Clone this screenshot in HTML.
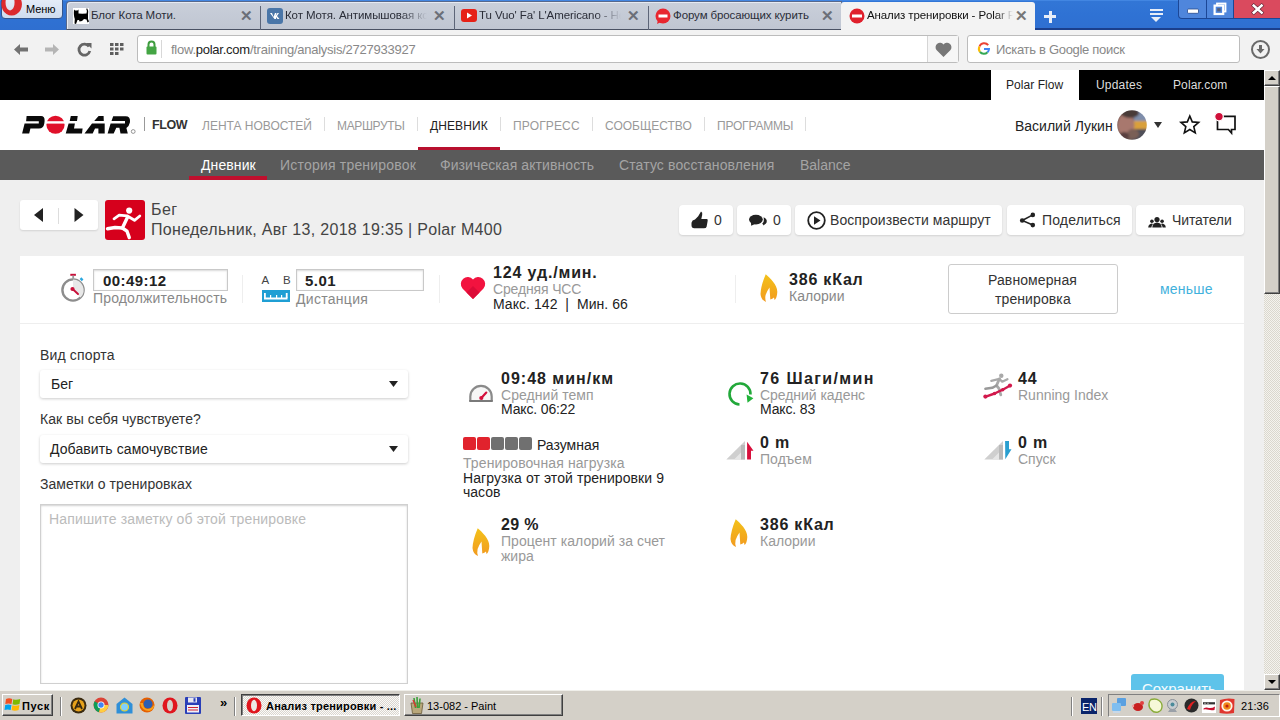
<!DOCTYPE html>
<html><head><meta charset="utf-8">
<style>
*{margin:0;padding:0;box-sizing:border-box}
html,body{width:1280px;height:720px;overflow:hidden;background:#efefef;font-family:"Liberation Sans",sans-serif;position:relative}
.a{position:absolute}
.t{position:absolute;white-space:nowrap;line-height:1}
svg{position:absolute;overflow:visible}
</style></head>
<body>
<!-- ============ BROWSER CHROME ============ -->
<div class="a" style="left:0;top:0;width:1280px;height:30px;background:linear-gradient(#4a8ee8 0,#3276d6 1.5px,#2f72d4 50%,#2f6fd0 100%)"></div>
<!-- opera menu -->
<div class="a" style="left:1px;top:-3px;width:62px;height:22px;background:linear-gradient(#e6edf8,#cfdcef);border:1px solid #34558c;border-radius:0 0 4px 4px"></div>
<svg class="a" style="left:1px;top:0" width="22" height="17" viewBox="0 0 22 17"><path fill-rule="evenodd" d="M10.7 -7 A10.3 11.3 0 1 1 10.6 -7Z M9 -5.6 A4.5 8 0 1 0 9.1 -5.6Z" fill="#dc2a2e"/></svg>
<div class="t" style="left:26px;top:3.9px;font-size:11px;color:#000;letter-spacing:-0.1px">Меню</div>
<!-- tabs -->
<div class="a" style="left:66px;top:1px;width:776px;height:29px;background:linear-gradient(#c9cfda,#c0c6d2);border:1px solid #56688c;border-bottom-color:#4a5264;border-radius:4px 0 0 0;box-shadow:inset 1px 1px 0 #e6eaf2"></div>
<div class="a" style="left:260px;top:6px;width:1px;height:24px;background:#5d6578"></div>
<div class="a" style="left:454px;top:6px;width:1px;height:24px;background:#5d6578"></div>
<div class="a" style="left:648px;top:6px;width:1px;height:24px;background:#5d6578"></div>
<div class="a" style="left:841px;top:2px;width:194px;height:28px;background:#f3f3f3;border-radius:3px 3px 0 0"></div>
<div class="a" style="left:1035px;top:28px;width:245px;height:2px;background:#1b3f8c"></div>
<!-- tab icons -->
<svg class="a" style="left:73px;top:8px" width="16" height="16" viewBox="0 0 16 16"><rect width="16" height="16" fill="#fff"/><path d="M1 1.5 L2 2.5 L4.5 2.5 L5.5 1.5 L5.5 5.5 Q9 5.8 13.5 5.5 Q14.5 3 13.2 0.8 L14.3 0.5 Q16 3 15 7 L15 11 L16 13.5 L14.5 14.5 L13.5 11.5 L11 11 L9 13 L6.5 13.5 L6 12 L4.5 12 L3 16 L1.5 15.5 L1.8 11 Q0.5 8 1 1.5Z" fill="#000"/></svg>
<div class="t" style="left:91px;top:10px;font-size:11.5px;color:#2a2d38;letter-spacing:-0.1px">Блог Кота Моти.</div>
<svg class="a" style="left:267px;top:8px" width="16" height="16" viewBox="0 0 16 16"><rect width="16" height="16" rx="3" fill="#4a76a8"/><path d="M3 5h2l1.5 4L8 5h1.5l-1 3 2-3H12l-2 3 2.5 3h-2L9 9v2H7.5z" fill="#fff"/></svg>
<div class="t" style="left:285px;top:10px;font-size:11.5px;color:#2a2d38;letter-spacing:-0.1px;width:142px;overflow:hidden;-webkit-mask-image:linear-gradient(90deg,#000 82%,transparent)">Кот Мотя. Антимышовая кот</div>
<svg class="a" style="left:461px;top:9px" width="16" height="13" viewBox="0 0 16 13"><rect width="16" height="13" rx="3" fill="#e62117"/><path d="M6 3.5v6l5-3z" fill="#fff"/></svg>
<div class="t" style="left:479px;top:10px;font-size:11.5px;color:#2a2d38;letter-spacing:-0.1px;width:142px;overflow:hidden;-webkit-mask-image:linear-gradient(90deg,#000 82%,transparent)">Tu Vuo' Fa' L'Americano - Hello</div>
<svg class="a" style="left:655px;top:8px" width="16" height="17" viewBox="0 0 16 17"><circle cx="8" cy="8" r="7.5" fill="#e8262f"/><path d="M3 12 L2 16 L6 14z" fill="#e8262f"/><rect x="3.5" y="6.5" width="9" height="3" fill="#fff"/></svg>
<div class="t" style="left:673px;top:10px;font-size:11.5px;color:#2a2d38;letter-spacing:-0.1px">Форум бросающих курить</div>
<svg class="a" style="left:849px;top:8px" width="16" height="16" viewBox="0 0 16 16"><circle cx="8" cy="8" r="7.5" fill="#e0202c"/><rect x="3" y="6.5" width="10" height="3" fill="#fff"/></svg>
<div class="t" style="left:867px;top:10px;font-size:11.5px;color:#111;letter-spacing:-0.1px;width:146px;overflow:hidden;-webkit-mask-image:linear-gradient(90deg,#000 88%,transparent)">Анализ тренировки - Polar Flow</div>
<!-- close x -->
<div class="t" style="left:240px;top:8px;font-size:15px;font-weight:bold;color:#6b6f78">✕</div>
<div class="t" style="left:433px;top:8px;font-size:15px;font-weight:bold;color:#6b6f78">✕</div>
<div class="t" style="left:627px;top:8px;font-size:15px;font-weight:bold;color:#6b6f78">✕</div>
<div class="t" style="left:821px;top:8px;font-size:15px;font-weight:bold;color:#6b6f78">✕</div>
<div class="t" style="left:1015px;top:8px;font-size:15px;font-weight:bold;color:#777">✕</div>
<!-- plus, menu -->
<div class="a" style="left:1044px;top:15px;width:12px;height:3px;background:#e8eef8"></div>
<div class="a" style="left:1048.5px;top:10.5px;width:3px;height:12px;background:#e8eef8"></div>
<div class="a" style="left:1150px;top:9px;width:13px;height:2px;background:#e8eef8"></div>
<div class="a" style="left:1150px;top:13px;width:13px;height:2px;background:#e8eef8"></div>
<div class="a" style="left:1151px;top:17px;width:0;height:0;border-left:5.5px solid transparent;border-right:5.5px solid transparent;border-top:5px solid #e8eef8"></div>
<!-- window buttons -->
<div class="a" style="left:1178px;top:-2px;width:56px;height:21px;background:#4f86dc;border:1px solid #1c4796;border-top:0;border-radius:0 0 0 4px"></div>
<div class="a" style="left:1206px;top:0;width:1px;height:18px;background:#1c4796"></div>
<div class="a" style="left:1233px;top:-2px;width:48px;height:21px;background:#da4a5e;border-bottom:1px solid #1c4796;border-left:1px solid #1c4796"></div>
<svg class="a" style="left:1170px;top:0" width="110" height="20" viewBox="0 0 110 20">
<rect x="17.5" y="9" width="11" height="4.3" rx="1" fill="#fff" stroke="#27498a" stroke-width="0.8"/>
<rect x="47" y="3.5" width="8.5" height="8" fill="none" stroke="#fff" stroke-width="1.8"/>
<rect x="44.6" y="5.6" width="8.6" height="8.4" fill="#4f86dc" stroke="#fff" stroke-width="2.2"/>
<rect x="47.2" y="8.2" width="3.4" height="3.2" fill="#555f78"/>
<path d="M83.8 5.6 L91.6 12.6 M91.6 5.6 L83.8 12.6" stroke="#5a2030" stroke-width="3.8" stroke-linecap="square"/>
<path d="M83.8 5.6 L91.6 12.6 M91.6 5.6 L83.8 12.6" stroke="#fff" stroke-width="2.6" stroke-linecap="square"/>
</svg>
<!-- address bar -->
<div class="a" style="left:0;top:30px;width:1280px;height:40px;background:#f2f2f2"></div>
<svg class="a" style="left:13px;top:43px" width="16" height="13" viewBox="0 0 16 13"><path d="M1 6.5 L7 1 L7 4.5 L15 4.5 L15 8.5 L7 8.5 L7 12Z" fill="#727272"/></svg>
<svg class="a" style="left:44px;top:43px" width="16" height="13" viewBox="0 0 16 13"><path d="M15 6.5 L9 1 L9 4.5 L1 4.5 L1 8.5 L9 8.5 L9 12Z" fill="#b5b5b5"/></svg>
<svg class="a" style="left:77px;top:42px" width="15" height="15" viewBox="0 0 15 15"><path d="M12 4.5 A5.5 5.5 0 1 0 12.8 9" fill="none" stroke="#666" stroke-width="2.8"/><path d="M9 1 L14.5 1 L14.5 6.5Z" fill="#666"/></svg>
<svg class="a" style="left:110px;top:43px" width="14" height="12" viewBox="0 0 14 12"><g fill="#5e5e5e"><rect x="0" y="0" width="3.5" height="3"/><rect x="5" y="0" width="3.5" height="3"/><rect x="10" y="0" width="3.5" height="3"/><rect x="0" y="4.5" width="3.5" height="3"/><rect x="5" y="4.5" width="3.5" height="3"/><rect x="10" y="4.5" width="3.5" height="3"/><rect x="0" y="9" width="3.5" height="3"/><rect x="5" y="9" width="3.5" height="3"/></g></svg>
<div class="a" style="left:137px;top:35px;width:822px;height:28px;background:#fff;border:1px solid #bcbcbc;border-radius:3px"></div>
<div class="a" style="left:927px;top:36px;width:31px;height:26px;background:#f6f6f6;border-left:1px solid #d5d5d5"></div>
<svg class="a" style="left:935px;top:42px" width="17" height="15" viewBox="0 0 17 15"><path d="M8.5 15 L1.5 8 A4 4 0 0 1 8.5 2.5 A4 4 0 0 1 15.5 8Z" fill="#777"/></svg>
<svg class="a" style="left:146px;top:40px" width="11" height="15" viewBox="0 0 11 15"><path d="M2.5 7 V4.5 A3 3 0 0 1 8.5 4.5 V7" fill="none" stroke="#3e9c3e" stroke-width="2"/><rect x="0.5" y="6.5" width="10" height="8" rx="1" fill="#44a544"/></svg>
<div class="a" style="left:161px;top:40px;width:1px;height:18px;background:#d8d8d8"></div>
<div class="t" style="left:171px;top:43px;font-size:13px;color:#888;letter-spacing:-0.25px">flow.<span style="color:#222">polar.com</span>/training/analysis/2727933927</div>
<div class="a" style="left:967px;top:35px;width:273px;height:28px;background:#fff;border:1px solid #bcbcbc;border-radius:3px"></div>
<svg class="a" style="left:978px;top:43px" width="12" height="12" viewBox="0 0 12 12"><path d="M10.2 2.2 A5 5 0 0 0 1.5 3.5" fill="none" stroke="#ea4335" stroke-width="2"/><path d="M1.5 3.5 A5 5 0 0 0 2 9" fill="none" stroke="#fbbc05" stroke-width="2"/><path d="M2 9 A5 5 0 0 0 9.5 9.3" fill="none" stroke="#34a853" stroke-width="2"/><path d="M9.5 9.3 A5 5 0 0 0 11 6 H6" fill="none" stroke="#4285f4" stroke-width="2"/></svg>
<div class="t" style="left:996px;top:43px;font-size:13px;color:#888;letter-spacing:-0.3px">Искать в Google поиск</div>
<div class="a" style="left:1251px;top:40px;width:19px;height:19px;border:2px solid #6a6a6a;border-radius:50%"></div>
<svg class="a" style="left:1255px;top:44px" width="11" height="11" viewBox="0 0 11 11"><path d="M4 1h3v4h2.5L5.5 9.5 1.5 5H4z" fill="#6a6a6a"/></svg>

<div class="a" style="left:0px;top:70px;width:1264px;height:30px;background:#000"></div>
<div class="a" style="left:991px;top:70px;width:88px;height:30px;background:#fff"></div>
<div class="t" style="left:1006px;top:78.80px;font-size:12px;color:#222;letter-spacing:0.05px">Polar Flow</div>
<div class="t" style="left:1096px;top:78.80px;font-size:12px;color:#ddd;letter-spacing:0.2px">Updates</div>
<div class="t" style="left:1173px;top:78.80px;font-size:12px;color:#ddd;letter-spacing:0.1px">Polar.com</div>
<div class="a" style="left:0px;top:100px;width:1264px;height:50px;background:#fff"></div>
<svg style="left:18px;top:112px" width="120" height="25" viewBox="0 0 120 25">
<g fill="#0a0a0a">
<path d="M8.6 3.9 H23 Q26.9 3.9 26.6 9 L26.3 11.5 Q25.5 16.5 21 16.5 H12.4 L11.2 21.4 H4.1 L6.6 11.6 H20.8 V9.2 H8.1 Z"/>
<path d="M52.8 3.9 H59.7 L59 9.1 H51.7Z M50.6 11.6 H56.9 L56 16.5 H64.6 L64 21.4 H47.75Z"/>
<path d="M80.6 3.9 H85.6 L85.8 9.1 H76.2Z M74 11.6 H86.7 V21.4 H80.4 V16.4 H77 L74.7 21.4 H66.5Z"/>
<path d="M95.2 4.2 H107.7 Q112.2 4.2 112 9 L111.9 10.5 Q111 14.5 108.4 16 L109.8 21.5 H102.5 L101.4 15.8 H98.3 L95.7 21.5 H89.6 L92.6 11.6 H107 V8.9 H93.5 Z"/>
</g>
<circle cx="37.5" cy="12.75" r="9.1" fill="#e0102a"/>
<rect x="27" y="9.2" width="21" height="2.4" fill="#fff"/>
<circle cx="115.2" cy="19.5" r="1.9" fill="none" stroke="#888" stroke-width="0.9"/>
</svg>
<div class="a" style="left:144px;top:117px;width:1px;height:14px;background:#999"></div>
<div class="t" style="left:152px;top:119.38px;font-size:12.5px;color:#333;font-weight:bold;letter-spacing:-0.4px">FLOW</div>
<div class="t" style="left:202px;top:119.80px;font-size:12px;color:#999">ЛЕНТА НОВОСТЕЙ</div>
<div class="a" style="left:324px;top:117px;width:1px;height:14px;background:#ddd"></div>
<div class="t" style="left:337px;top:119.80px;font-size:12px;color:#999;letter-spacing:-0.35px">МАРШРУТЫ</div>
<div class="a" style="left:417px;top:117px;width:1px;height:14px;background:#ddd"></div>
<div class="t" style="left:430px;top:119.80px;font-size:12px;color:#222;letter-spacing:0.1px">ДНЕВНИК</div>
<div class="a" style="left:418px;top:147px;width:82px;height:3px;background:#b8102e"></div>
<div class="a" style="left:500px;top:117px;width:1px;height:14px;background:#ddd"></div>
<div class="t" style="left:513px;top:119.80px;font-size:12px;color:#999;letter-spacing:0.15px">ПРОГРЕСС</div>
<div class="a" style="left:592px;top:117px;width:1px;height:14px;background:#ddd"></div>
<div class="t" style="left:605px;top:119.80px;font-size:12px;color:#999">СООБЩЕСТВО</div>
<div class="a" style="left:704px;top:117px;width:1px;height:14px;background:#ddd"></div>
<div class="t" style="left:717px;top:119.80px;font-size:12px;color:#999;letter-spacing:-0.2px">ПРОГРАММЫ</div>
<div class="a" style="left:805px;top:117px;width:1px;height:14px;background:#ddd"></div>
<div class="t" style="left:1015px;top:119.10px;font-size:14px;color:#222">Василий Лукин</div>
<svg style="left:1117px;top:110px" width="30" height="30" viewBox="0 0 30 30">
<defs><clipPath id="av"><circle cx="15" cy="15" r="14.8"/></clipPath><filter id="avb" x="-10%" y="-10%" width="120%" height="120%"><feGaussianBlur stdDeviation="0.9"/></filter></defs>
<g clip-path="url(#av)"><g filter="url(#avb)"><rect x="-2" y="-2" width="34" height="34" fill="#6a5550"/><rect x="17" y="-2" width="15" height="13" fill="#7f8eab"/><rect x="17" y="11" width="15" height="8" fill="#d9a03a"/><rect x="15" y="19" width="17" height="13" fill="#4f4f58"/>
<ellipse cx="9" cy="15" rx="8.5" ry="12" fill="#a8786e"/><ellipse cx="13" cy="3" rx="9" ry="5" fill="#4a3a38"/><ellipse cx="16" cy="24" rx="6" ry="5" fill="#7a5e56"/><ellipse cx="7" cy="26" rx="5" ry="4" fill="#5a4040"/></g></g></svg>
<svg style="left:1154px;top:122px" width="8" height="6"><path d="M0 0h8L4 6z" fill="#333"/></svg>
<svg style="left:1180px;top:115px" width="20" height="20" viewBox="0 0 20 20"><path d="M9.80 1.00 L12.27 6.90 L18.64 7.43 L13.79 11.60 L15.27 17.82 L9.80 14.50 L4.33 17.82 L5.81 11.60 L0.96 7.43 L7.33 6.90Z" fill="none" stroke="#111" stroke-width="1.6" stroke-linejoin="miter"/></svg>
<svg style="left:1214px;top:110px" width="26" height="26" viewBox="0 0 26 26"><path d="M8.5 6.3 H21 V19.5 H17.5 V23 L14.4 19.5 H3.5 V9.5" fill="none" stroke="#111" stroke-width="1.7"/><circle cx="5" cy="6.6" r="4.3" fill="#d0103a" stroke="#fff" stroke-width="1.2"/></svg>
<div class="a" style="left:0px;top:150px;width:1264px;height:30px;background:#5a5a5a"></div>
<div class="t" style="left:201px;top:158.10px;font-size:14px;color:#fff;letter-spacing:0.1px">Дневник</div>
<div class="a" style="left:189px;top:176px;width:78px;height:4px;background:#c0102e"></div>
<div class="t" style="left:280px;top:158.10px;font-size:14px;color:#a4a4a4;letter-spacing:0.2px">История тренировок</div>
<div class="t" style="left:440px;top:158.10px;font-size:14px;color:#a4a4a4;letter-spacing:0.08px">Физическая активность</div>
<div class="t" style="left:619px;top:158.10px;font-size:14px;color:#a4a4a4;letter-spacing:0.12px">Статус восстановления</div>
<div class="t" style="left:800px;top:158.10px;font-size:14px;color:#a4a4a4">Balance</div>
<div class="a" style="left:20px;top:200px;width:78px;height:30px;background:#fff;border-radius:3px;box-shadow:0 1px 2px rgba(0,0,0,0.12)"></div>
<svg style="left:34px;top:208px" width="10" height="14"><path d="M9 0 V14 L0 7Z" fill="#222"/></svg>
<div class="a" style="left:58px;top:208px;width:1px;height:16px;background:#ddd"></div>
<svg style="left:74px;top:208px" width="10" height="14"><path d="M0.5 0 V14 L9.5 7Z" fill="#222"/></svg>
<div class="a" style="left:105px;top:200px;width:40px;height:40px;background:#d6001c;border-radius:3px"></div>
<svg style="left:105px;top:200px" width="40" height="40" viewBox="0 0 40 40">
<circle cx="24.2" cy="10.6" r="3.1" fill="#fff"/>
<path d="M9 18.8 L14.2 15.2 L22 15.8 L29.5 20.3 L34.8 16" fill="none" stroke="#fff" stroke-width="2.8" stroke-linecap="round" stroke-linejoin="round"/>
<path d="M22.6 17 L17.4 28 L22 31.2 L24.3 37.6" fill="none" stroke="#fff" stroke-width="3.4" stroke-linecap="round" stroke-linejoin="round"/>
<path d="M17.4 28 L10 27.5 L2.5 28.8" fill="none" stroke="#fff" stroke-width="3.4" stroke-linecap="round" stroke-linejoin="round"/>
</svg>
<div class="t" style="left:151px;top:202.40px;font-size:16px;color:#444;letter-spacing:0.4px">Бег</div>
<div class="t" style="left:151px;top:222.40px;font-size:16px;color:#444;letter-spacing:0.3px">Понедельник, Авг 13, 2018 19:35 | Polar M400</div>
<div class="a" style="left:679px;top:205px;width:54px;height:30px;background:#fff;border-radius:4px;box-shadow:0 1px 2px rgba(0,0,0,0.12)"></div>
<svg style="left:691px;top:211px" width="18" height="18" viewBox="0 0 18 18"><path d="M10 0.5 Q11.8 1 11.2 4 L10.3 8 H16 Q17.2 8.6 16.6 10.2 L15.6 15.8 Q15.1 17.3 13 17.3 H3.2 Q0.5 17 0.5 14.2 V11.8 Q1 9.2 4 8.6 L7.2 5.2 Z" fill="#222"/></svg>
<div class="t" style="left:714px;top:213.10px;font-size:14px;color:#333">0</div>
<div class="a" style="left:737px;top:205px;width:54px;height:30px;background:#fff;border-radius:4px;box-shadow:0 1px 2px rgba(0,0,0,0.12)"></div>
<svg style="left:748px;top:213px" width="20" height="14" viewBox="0 0 20 14"><ellipse cx="7.9" cy="6.6" rx="6.9" ry="4.8" fill="#222"/><path d="M3 9.5 L3.2 12.8 L7 11Z" fill="#222"/><path d="M15.6 4.3 Q19.6 6.3 18.6 9.4 Q17.8 11 16.6 11.5 L15.6 12.6 Q15.2 11.3 14.2 10.8 Q16.6 8.8 15.6 4.3Z" fill="#222"/></svg>
<div class="t" style="left:773px;top:213.10px;font-size:14px;color:#333">0</div>
<div class="a" style="left:795px;top:205px;width:207px;height:30px;background:#fff;border-radius:4px;box-shadow:0 1px 2px rgba(0,0,0,0.12)"></div>
<svg style="left:807px;top:211px" width="19" height="19" viewBox="0 0 19 19"><circle cx="9.5" cy="9.5" r="8.3" fill="none" stroke="#222" stroke-width="1.8"/><path d="M7 5.3 V13.7 L13.5 9.5Z" fill="#222"/></svg>
<div class="t" style="left:830px;top:213.10px;font-size:14px;color:#333;letter-spacing:0.08px">Воспроизвести маршрут</div>
<div class="a" style="left:1007px;top:205px;width:125px;height:30px;background:#fff;border-radius:4px;box-shadow:0 1px 2px rgba(0,0,0,0.12)"></div>
<svg style="left:1019px;top:212px" width="17" height="17" viewBox="0 0 17 17"><path d="M13.8 2.9 L3.2 8.5 L13.8 13.1" fill="none" stroke="#222" stroke-width="1.6"/><circle cx="13.8" cy="2.9" r="2.3" fill="#222"/><circle cx="3.2" cy="8.5" r="2.3" fill="#222"/><circle cx="13.8" cy="13.1" r="2.3" fill="#222"/></svg>
<div class="t" style="left:1042px;top:213.10px;font-size:14px;color:#333;letter-spacing:0.15px">Поделиться</div>
<div class="a" style="left:1136px;top:205px;width:108px;height:30px;background:#fff;border-radius:4px;box-shadow:0 1px 2px rgba(0,0,0,0.12)"></div>
<svg style="left:1148px;top:216px" width="18" height="12" viewBox="0 0 18 12"><circle cx="9" cy="3.6" r="2.6" fill="#222"/><path d="M4.3 11.5 Q4.6 6.8 9 6.6 Q13.4 6.8 13.7 11.5Z" fill="#222"/><circle cx="3.9" cy="5.2" r="1.8" fill="#222"/><path d="M0.2 11.5 Q0.5 8 3.9 7.6 L5 7.9 Q3.6 9.3 3.4 11.5Z" fill="#222"/><circle cx="14.1" cy="5.2" r="1.8" fill="#222"/><path d="M17.8 11.5 Q17.5 8 14.1 7.6 L13 7.9 Q14.4 9.3 14.6 11.5Z" fill="#222"/></svg>
<div class="t" style="left:1172px;top:213.10px;font-size:14px;color:#333;letter-spacing:-0.1px">Читатели</div>
<div class="a" style="left:20px;top:256px;width:1224px;height:440px;background:#fff"></div>
<div class="a" style="left:20px;top:323px;width:1224px;height:1px;background:#eee"></div>
<svg style="left:60px;top:273px" width="27" height="30" viewBox="0 0 27 30">
<rect x="10.3" y="0.8" width="5.6" height="2" fill="#c8103a"/><rect x="12.3" y="2.5" width="1.8" height="3" fill="#999"/>
<path d="M20.5 5.2 L22.6 7.3" stroke="#29a7df" stroke-width="2.4"/>
<circle cx="13" cy="17" r="10.6" fill="#fff" stroke="#8d8d8d" stroke-width="2.4"/>
<path d="M13 17 V6.4 A10.6 10.6 0 0 1 20.5 24.5Z" fill="#e8e8e8"/>
<path d="M12.6 16 L18 21" stroke="#c8103a" stroke-width="1.9" stroke-linecap="round"/><circle cx="12.5" cy="16" r="2.1" fill="#c8103a"/>
</svg>
<div class="a" style="left:93px;top:269px;width:135px;height:22px;background:#fff;border:1px solid #c9c9c9;box-shadow:inset 0 1px 2px rgba(0,0,0,0.15)"></div>
<div class="t" style="left:103px;top:273.25px;font-size:15px;color:#222;font-weight:bold;letter-spacing:0.45px">00:49:12</div>
<div class="t" style="left:93px;top:291.10px;font-size:14px;color:#888;letter-spacing:0.15px">Продолжительность</div>
<div class="a" style="left:242px;top:275px;width:1px;height:28px;background:#eee"></div>
<div class="t" style="left:261.5px;top:274.73px;font-size:11.5px;color:#444">A</div>
<div class="t" style="left:283px;top:274.73px;font-size:11.5px;color:#444">B</div>
<svg style="left:262px;top:290px" width="28" height="12" viewBox="0 0 28 12"><rect width="28" height="12" fill="#1f9fd4"/><g fill="#fff"><rect x="2" y="7.5" width="23.5" height="2"/><rect x="2" y="3" width="1.8" height="5"/><rect x="8" y="5" width="1.2" height="3"/><rect x="14" y="5" width="1.2" height="3"/><rect x="19" y="5" width="1.2" height="3"/><rect x="23.8" y="3" width="1.8" height="5"/></g></svg>
<div class="a" style="left:296px;top:269px;width:128px;height:22px;background:#fff;border:1px solid #c9c9c9;box-shadow:inset 0 1px 2px rgba(0,0,0,0.15)"></div>
<div class="t" style="left:305px;top:273.25px;font-size:15px;color:#222;font-weight:bold;letter-spacing:0.45px">5.01</div>
<div class="t" style="left:296px;top:292.10px;font-size:14px;color:#888;letter-spacing:0.3px">Дистанция</div>
<div class="a" style="left:439px;top:275px;width:1px;height:28px;background:#eee"></div>
<svg style="left:460px;top:276px" width="26" height="23" viewBox="0 0 26 23"><path d="M13 23 L2.5 12.5 A6.5 6.5 0 0 1 13 3.5 A6.5 6.5 0 0 1 23.5 12.5Z" fill="#f2133f"/><path d="M13 23 L6.5 16.5 L13 10 L19.5 16.5Z" fill="#dc0c38"/></svg>
<div class="t" style="left:493px;top:265.40px;font-size:16px;color:#222;font-weight:bold;letter-spacing:0.85px">124 уд./мин.</div>
<div class="t" style="left:493px;top:282.10px;font-size:14px;color:#999;letter-spacing:-0.15px">Средняя ЧСС</div>
<div class="t" style="left:493px;top:297.10px;font-size:14px;color:#222;letter-spacing:0.05px">Макс. 142 &nbsp;|&nbsp; Мин. 66</div>
<div class="a" style="left:735px;top:275px;width:1px;height:28px;background:#eee"></div>
<svg style="left:758px;top:273px" width="20" height="29" viewBox="0 0 20 29"><defs><linearGradient id="fl758" x1="0" y1="0" x2="0" y2="1"><stop offset="0" stop-color="#f3c21a"/><stop offset="1" stop-color="#f29a1f"/></linearGradient></defs><path d="M7.7 1.3 C12 5 19.5 12 19.3 19 C19.2 23 18 26 16.5 27 L16 24.5 Q14.5 26.2 12.3 26.5 L11.5 14.5 Q9 18 7.6 22 Q6.8 25.5 8 29 Q3 27 2.5 21 Q2.8 13 7.7 1.3Z" fill="url(#fl758)"/></svg>
<div class="t" style="left:789px;top:272.40px;font-size:16px;color:#222;font-weight:bold;letter-spacing:0.8px">386 кКал</div>
<div class="t" style="left:789px;top:289.10px;font-size:14px;color:#888">Калории</div>
<div class="a" style="left:948px;top:264px;width:170px;height:50px;background:#fff;border:1px solid #ccc;border-radius:3px"></div>
<div class="t" style="left:988px;top:273.10px;font-size:14px;color:#333;letter-spacing:0.1px">Равномерная</div>
<div class="t" style="left:995px;top:292.10px;font-size:14px;color:#333;letter-spacing:0.1px">тренировка</div>
<div class="t" style="left:1160px;top:282.10px;font-size:14px;color:#3fb1dc;letter-spacing:0.2px">меньше</div>
<div class="t" style="left:40px;top:348.10px;font-size:14px;color:#333;letter-spacing:0.15px">Вид спорта</div>
<div class="a" style="left:40px;top:370px;width:368px;height:28px;background:#fff;border-radius:3px;box-shadow:0 1px 3px rgba(0,0,0,0.2)"></div>
<div class="t" style="left:51px;top:377.10px;font-size:14px;color:#222">Бег</div>
<svg style="left:389px;top:381px" width="9" height="6"><path d="M0 0h9L4.5 6z" fill="#222"/></svg>
<div class="t" style="left:40px;top:412.10px;font-size:14px;color:#333;letter-spacing:0.07px">Как вы себя чувствуете?</div>
<div class="a" style="left:40px;top:435px;width:368px;height:28px;background:#fff;border-radius:3px;box-shadow:0 1px 3px rgba(0,0,0,0.2)"></div>
<div class="t" style="left:50px;top:442.10px;font-size:14px;color:#222;letter-spacing:0.1px">Добавить самочувствие</div>
<svg style="left:389px;top:446px" width="9" height="6"><path d="M0 0h9L4.5 6z" fill="#222"/></svg>
<div class="t" style="left:40px;top:477.10px;font-size:14px;color:#333;letter-spacing:0.05px">Заметки о тренировках</div>
<div class="a" style="left:40px;top:504px;width:368px;height:180px;background:#fff;border:1px solid #d0d0d0;box-shadow:inset 0 1px 2px rgba(0,0,0,0.18)"></div>
<div class="t" style="left:49px;top:512.10px;font-size:14px;color:#bbb;letter-spacing:0.15px">Напишите заметку об этой тренировке</div>
<svg style="left:468px;top:384px" width="26" height="19" viewBox="0 0 26 19"><path d="M2.3 17 V12.5 A10.7 10.7 0 0 1 23.7 12.5 V17" fill="#f6f6f6" stroke="#8a8a8a" stroke-width="2.2"/><rect x="1.2" y="16" width="23.6" height="2" fill="#7a7a7a"/><path d="M13.3 14 L18.3 8.6" stroke="#d4103c" stroke-width="2.2" stroke-linecap="round"/><circle cx="13.3" cy="14" r="2.1" fill="#d4103c"/></svg>
<div class="t" style="left:501px;top:371.40px;font-size:16px;color:#222;font-weight:bold;letter-spacing:1.0px">09:48 мин/км</div>
<div class="t" style="left:501px;top:388.10px;font-size:14px;color:#999;letter-spacing:0.05px">Средний темп</div>
<div class="t" style="left:501px;top:402.10px;font-size:14px;color:#222;letter-spacing:-0.15px">Макс. 06:22</div>
<div class="a" style="left:463px;top:437px;width:12.5px;height:13px;background:#e1232d;border-radius:2px"></div>
<div class="a" style="left:477px;top:437px;width:12.5px;height:13px;background:#e1232d;border-radius:2px"></div>
<div class="a" style="left:491px;top:437px;width:12.5px;height:13px;background:#707070;border-radius:2px"></div>
<div class="a" style="left:505px;top:437px;width:12.5px;height:13px;background:#707070;border-radius:2px"></div>
<div class="a" style="left:519px;top:437px;width:12.5px;height:13px;background:#707070;border-radius:2px"></div>
<div class="t" style="left:537px;top:438.10px;font-size:14px;color:#222">Разумная</div>
<div class="t" style="left:463px;top:456.10px;font-size:14px;color:#999;letter-spacing:0.1px">Тренировочная нагрузка</div>
<div class="t" style="left:463px;top:471.10px;font-size:14px;color:#222;letter-spacing:0.08px">Нагрузка от этой тренировки 9</div>
<div class="t" style="left:463px;top:485.10px;font-size:14px;color:#222">часов</div>
<svg style="left:470px;top:527px" width="20" height="29" viewBox="0 0 20 29"><defs><linearGradient id="fl470" x1="0" y1="0" x2="0" y2="1"><stop offset="0" stop-color="#f3c21a"/><stop offset="1" stop-color="#f29a1f"/></linearGradient></defs><path d="M7.7 1.3 C12 5 19.5 12 19.3 19 C19.2 23 18 26 16.5 27 L16 24.5 Q14.5 26.2 12.3 26.5 L11.5 14.5 Q9 18 7.6 22 Q6.8 25.5 8 29 Q3 27 2.5 21 Q2.8 13 7.7 1.3Z" fill="url(#fl470)"/></svg>
<div class="t" style="left:501px;top:517.40px;font-size:16px;color:#222;font-weight:bold;letter-spacing:0.3px">29 %</div>
<div class="t" style="left:501px;top:534.10px;font-size:14px;color:#999;letter-spacing:0.05px">Процент калорий за счет</div>
<div class="t" style="left:501px;top:549.10px;font-size:14px;color:#999">жира</div>
<svg style="left:727px;top:382px" width="28" height="24" viewBox="0 0 28 24"><path d="M12.5 22.5 A10.5 10.5 0 1 1 23.5 12.5" fill="none" stroke="#22a83a" stroke-width="2.6"/><path d="M19.6 12.4 L26.4 16.2 L20.5 20.8Z" fill="#22b33a"/></svg>
<div class="t" style="left:760px;top:371.40px;font-size:16px;color:#222;font-weight:bold;letter-spacing:1.4px">76 Шаги/мин</div>
<div class="t" style="left:760px;top:388.10px;font-size:14px;color:#999;letter-spacing:-0.05px">Средний каденс</div>
<div class="t" style="left:760px;top:402.10px;font-size:14px;color:#222;letter-spacing:-0.15px">Макс. 83</div>
<svg style="left:726px;top:441px" width="28" height="19" viewBox="0 0 28 19"><path d="M0.3 18.5 L19 0 V18.5Z" fill="#cfcfcf"/><path d="M8 18.5 L15 11.5 V18.5Z" fill="#e6e6e6"/><rect x="15" y="4" width="4" height="14.5" fill="#b9b9b9"/><path d="M21.1 0.8 L27.5 9.8 H25 V18.5 H21.1Z" fill="#d8103c"/></svg>
<div class="t" style="left:760px;top:435.40px;font-size:16px;color:#222;font-weight:bold;letter-spacing:0.8px">0 m</div>
<div class="t" style="left:760px;top:452.10px;font-size:14px;color:#999;letter-spacing:0.05px">Подъем</div>
<svg style="left:728px;top:518px" width="20" height="29" viewBox="0 0 20 29"><defs><linearGradient id="fl728" x1="0" y1="0" x2="0" y2="1"><stop offset="0" stop-color="#f3c21a"/><stop offset="1" stop-color="#f29a1f"/></linearGradient></defs><path d="M7.7 1.3 C12 5 19.5 12 19.3 19 C19.2 23 18 26 16.5 27 L16 24.5 Q14.5 26.2 12.3 26.5 L11.5 14.5 Q9 18 7.6 22 Q6.8 25.5 8 29 Q3 27 2.5 21 Q2.8 13 7.7 1.3Z" fill="url(#fl728)"/></svg>
<div class="t" style="left:760px;top:517.40px;font-size:16px;color:#222;font-weight:bold;letter-spacing:0.8px">386 кКал</div>
<div class="t" style="left:760px;top:534.10px;font-size:14px;color:#999">Калории</div>
<svg style="left:983px;top:373px" width="30" height="27" viewBox="0 0 30 27">
<circle cx="18.3" cy="2.7" r="2.2" fill="#a9a9a9"/>
<path d="M8.3 7.8 L16.4 5.9 L19.2 8.7 L24.4 6.3" fill="none" stroke="#a9a9a9" stroke-width="2.3" stroke-linecap="round" stroke-linejoin="round"/>
<path d="M16.4 5.9 L13.5 12.5 L15.9 15.3 L17.8 21.9" fill="none" stroke="#a9a9a9" stroke-width="2.8" stroke-linecap="round" stroke-linejoin="round"/>
<path d="M13.5 12.5 L9.3 14.8 L2.4 15.8" fill="none" stroke="#999" stroke-width="2.5" stroke-linecap="round" stroke-linejoin="round"/>
<path d="M2.2 23.8 L11.6 20.5 L19.7 16.7 L27.2 12.5" fill="none" stroke="#d2194c" stroke-width="2.4" stroke-linecap="round" stroke-linejoin="round"/>
<circle cx="2.4" cy="23.6" r="2.1" fill="#d2194c"/><circle cx="11.6" cy="20.5" r="1.7" fill="#d2194c"/><circle cx="19.7" cy="16.7" r="1.7" fill="#d2194c"/><circle cx="27" cy="12.6" r="2.1" fill="#d2194c"/>
</svg>
<div class="t" style="left:1018px;top:371.40px;font-size:16px;color:#222;font-weight:bold;letter-spacing:0.9px">44</div>
<div class="t" style="left:1018px;top:388.10px;font-size:14px;color:#999">Running Index</div>
<svg style="left:984px;top:441px" width="28" height="19" viewBox="0 0 28 19"><path d="M0.3 18.5 L19 0 V18.5Z" fill="#cfcfcf"/><path d="M8 18.5 L15 11.5 V18.5Z" fill="#e6e6e6"/><rect x="15" y="4" width="4" height="14.5" fill="#b9b9b9"/><path d="M21.1 0 H25 V8.3 H27.5 L21.3 18.3Z" fill="#2a9fd0"/></svg>
<div class="t" style="left:1018px;top:435.40px;font-size:16px;color:#222;font-weight:bold;letter-spacing:0.8px">0 m</div>
<div class="t" style="left:1018px;top:452.10px;font-size:14px;color:#999">Спуск</div>
<div class="a" style="left:1131px;top:674px;width:93px;height:22px;background:#5ec3ea;border-radius:3px 3px 0 0"></div>
<div class="t" style="left:1142px;top:681.25px;font-size:15px;color:#f4fbfe;letter-spacing:-0.1px">Сохранить</div>
<div class="a" style="left:1264px;top:70px;width:16px;height:620px;background:repeating-conic-gradient(#f4f3ee 0 25%,#dad7ce 0 50%) 0 0/2px 2px"></div>
<div class="a" style="left:1264px;top:70px;width:16px;height:16px;background:#d4d0c8;border:1px solid;border-color:#fff #404040 #404040 #fff;box-shadow:inset -1px -1px #808080"></div>
<svg style="left:1268px;top:76px" width="8" height="4"><path d="M0 4h8L4 0z" fill="#000"/></svg>
<div class="a" style="left:1264px;top:86px;width:16px;height:208px;background:#d4d0c8;border:1px solid;border-color:#fff #404040 #404040 #fff;box-shadow:inset -1px -1px #808080"></div>
<div class="a" style="left:1264px;top:674px;width:16px;height:16px;background:#d4d0c8;border:1px solid;border-color:#fff #404040 #404040 #fff;box-shadow:inset -1px -1px #808080"></div>
<svg style="left:1268px;top:680px" width="8" height="4"><path d="M0 0h8L4 4z" fill="#000"/></svg>
<div class="a" style="left:0px;top:690px;width:1280px;height:30px;background:#d4d0c8;border-top:1px solid #fff"></div>
<div class="a" style="left:0px;top:690px;width:1280px;height:1px;background:#f0efea"></div>
<div class="a" style="left:2px;top:694px;width:51px;height:22px;background:#d4d0c8;border:1px solid;border-color:#fff #404040 #404040 #fff;box-shadow:inset -1px -1px #808080"></div>
<svg style="left:5px;top:697px" width="16" height="15" viewBox="0 0 16 15">
<path d="M1 2 Q4 0.5 7.3 2 L6.5 7 Q3.5 5.8 0.3 7Z" fill="#f25022"/>
<path d="M8.3 2.3 Q11.5 3.5 15.3 2 L14.5 7 Q11 8.3 7.5 7.2Z" fill="#7fba00"/>
<path d="M0.2 8 Q3.3 6.8 6.4 8 L5.7 13 Q2.5 11.8 -0.5 13Z" fill="#00a4ef"/>
<path d="M7.4 8.2 Q11 9.3 14.4 8 L13.6 13 Q10 14.2 6.6 13.1Z" fill="#ffb900"/>
</svg>
<div class="t" style="left:22px;top:700.65px;font-size:11px;color:#000;font-weight:bold;letter-spacing:0.6px">Пуск</div>
<div class="a" style="left:60px;top:697px;width:2px;height:19px;border-left:1px solid #808080;border-right:1px solid #fff"></div>
<svg style="left:70px;top:697px" width="17" height="17" viewBox="0 0 17 17"><circle cx="8.5" cy="8.5" r="8" fill="#3a2a10"/><circle cx="8.5" cy="8.5" r="6" fill="#e8a21a"/><path d="M5 12 L8.5 4.5 L12 12 M6.5 9.5 H10.5" fill="none" stroke="#3a2a10" stroke-width="1.8"/></svg>
<svg style="left:93px;top:697px" width="16" height="16" viewBox="0 0 16 16"><circle cx="8" cy="8" r="7.5" fill="#db4437"/><path d="M8 8 L1.5 4.3 A7.5 7.5 0 0 0 6 15.2Z" fill="#0f9d58"/><path d="M8 8 L6 15.2 A7.5 7.5 0 0 0 15.5 8 L8 8Z" fill="#ffcd40"/><circle cx="8" cy="8" r="3.5" fill="#fff"/><circle cx="8" cy="8" r="2.7" fill="#4285f4"/></svg>
<svg style="left:116px;top:697px" width="17" height="17" viewBox="0 0 17 17"><path d="M8.5 0.5 L16.5 7 V16.5 H0.5 V7Z" fill="#2f8fd8"/><circle cx="8.5" cy="10" r="4" fill="#7ed0ff" stroke="#e8d02a" stroke-width="1.2"/></svg>
<svg style="left:139px;top:697px" width="16" height="16" viewBox="0 0 16 16"><circle cx="8" cy="8" r="7.5" fill="#e66000"/><circle cx="9" cy="7" r="4.5" fill="#2d5fb0"/><path d="M1 6 Q3 14 10 14 Q15 13 15.5 7 Q13 12 8 12 Q4 11 4 6Z" fill="#f7a31c"/></svg>
<svg style="left:162px;top:697px" width="16" height="17" viewBox="0 0 16 17"><ellipse cx="8" cy="8.5" rx="7.5" ry="8" fill="#e0161e"/><ellipse cx="8" cy="8.5" rx="3" ry="5.8" fill="#d4d0c8"/></svg>
<svg style="left:185px;top:697px" width="16" height="17" viewBox="0 0 16 17"><rect x="0" y="0" width="16" height="17" rx="1" fill="#2a3fb8"/><rect x="3" y="0.5" width="9" height="5" fill="#e8e8f0"/><rect x="8.5" y="1.2" width="2" height="3.5" fill="#2a3fb8"/><rect x="2" y="8" width="12" height="7.5" fill="#f0f0f8"/><path d="M3 10.5h10M3 13h10" stroke="#d02030" stroke-width="1"/></svg>
<div class="t" style="left:220px;top:695.95px;font-size:13px;color:#000;font-weight:bold">»</div>
<div class="a" style="left:234px;top:697px;width:2px;height:19px;border-left:1px solid #808080;border-right:1px solid #fff"></div>
<div class="a" style="left:241px;top:694px;width:159px;height:22px;background:repeating-conic-gradient(#fbfaf8 0 25%,#dad6cf 0 50%) 0 0/2px 2px;border:1px solid;border-color:#404040 #fff #fff #404040;box-shadow:inset 1px 1px #808080"></div>
<svg style="left:246px;top:697px" width="16" height="17" viewBox="0 0 16 17"><ellipse cx="8" cy="8.5" rx="7.5" ry="8" fill="#e0161e"/><ellipse cx="8" cy="8.5" rx="3" ry="5.8" fill="#eceae6"/></svg>
<div class="t" style="left:266px;top:700.65px;font-size:11px;color:#000;font-weight:bold;letter-spacing:0.2px">Анализ тренировки - ...</div>
<div class="a" style="left:404px;top:694px;width:159px;height:22px;background:#d4d0c8;border:1px solid;border-color:#fff #404040 #404040 #fff;box-shadow:inset -1px -1px #808080"></div>
<svg style="left:409px;top:697px" width="16" height="17" viewBox="0 0 16 17"><path d="M2 6 H14 L12.5 16.5 H3.5Z" fill="#b9a77a" stroke="#6a5a3a" stroke-width="0.8"/><path d="M5 1 L6.5 11 M8 0 L8.5 11 M11 1.5 L10 11" stroke="#3aa03a" stroke-width="1.6"/><path d="M4 3 L7 10" stroke="#e03030" stroke-width="1.4"/></svg>
<div class="t" style="left:427px;top:700.65px;font-size:11px;color:#000">13-082 - Paint</div>
<div class="a" style="left:1071px;top:697px;width:2px;height:19px;border-left:1px solid #808080;border-right:1px solid #fff"></div>
<div class="a" style="left:1081px;top:698px;width:16px;height:16px;background:#0a246a"></div>
<div class="t" style="left:1082px;top:701.65px;font-size:11px;color:#fff;letter-spacing:-0.3px">EN</div>
<div class="a" style="left:1101px;top:697px;width:2px;height:19px;border-left:1px solid #808080;border-right:1px solid #fff"></div>
<div class="a" style="left:1108px;top:694px;width:172px;height:23px;border:1px solid;border-color:#808080 #fff #fff #808080"></div>
<svg style="left:1112px;top:698px" width="14" height="15" viewBox="0 0 14 15"><rect x="5" y="0" width="9" height="8" rx="1" fill="#5aa0e0"/><rect x="0" y="5" width="9" height="8" rx="1" fill="#7fbef0"/><rect x="1" y="13" width="7" height="2" fill="#c8d8e8"/></svg>
<svg style="left:1131px;top:700px" width="15" height="12" viewBox="0 0 15 12"><ellipse cx="7" cy="7" rx="5" ry="4" fill="#c82020"/><circle cx="11" cy="3" r="2" fill="#e04040"/><circle cx="2" cy="6" r="1.2" fill="#f0a0a0"/></svg>
<svg style="left:1148px;top:698px" width="15" height="15" viewBox="0 0 15 15"><path d="M3 1.5 Q8 0 11 2.5 Q14.5 5 14 9 Q13.5 13 10 14 Q6 15 3.5 12 Q0.5 9 1 5.5 Q1.5 2.5 3 1.5Z" fill="#f6f8d8" stroke="#8aac3a" stroke-width="1.4"/></svg>
<svg style="left:1166px;top:699px" width="13" height="14" viewBox="0 0 13 14"><circle cx="6.5" cy="5.5" r="5" fill="#c8ccd0" stroke="#8a9098" stroke-width="1"/><circle cx="6.5" cy="5.5" r="2" fill="#4a8a9a"/><path d="M2 13h9l-2-3h-5z" fill="#9aa0a8"/></svg>
<svg style="left:1184px;top:698px" width="15" height="15" viewBox="0 0 15 15"><circle cx="7.5" cy="7.5" r="7" fill="#2a2a2a"/><path d="M3 11 Q7 2 12 3.5 Q8 5 6 12Z" fill="#e02020"/></svg>
<div class="a" style="left:1202px;top:699px;width:14px;height:14px;background:#fff"></div>
<svg style="left:1202px;top:699px" width="14" height="14" viewBox="0 0 14 14"><rect x="1" y="3.2" width="12" height="2.2" fill="#333"/><rect x="2.5" y="3.8" width="1" height="1" fill="#fff"/><rect x="5.5" y="3.8" width="1" height="1" fill="#fff"/><path d="M1.5 9.5 Q4 8 7 9 Q10 9.5 13 7.5 L12.5 11 Q9 11.5 6.5 10.8 Q4 10 1.5 10.5Z" fill="#c8102e"/></svg>
<svg style="left:1219px;top:698px" width="16" height="16" viewBox="0 0 16 16"><path d="M1 2 Q8 -0.5 15.5 1 L15 15 Q8 16.5 0.5 15Z" fill="#e0362e"/><circle cx="8" cy="8" r="5.6" fill="#fff4ea"/><circle cx="8" cy="8" r="3.8" fill="#f08a1a"/><circle cx="8" cy="8" r="1.6" fill="#c02010"/></svg>
<div class="t" style="left:1241px;top:700.65px;font-size:11px;color:#000;letter-spacing:0.1px">21:36</div>
</body></html>
